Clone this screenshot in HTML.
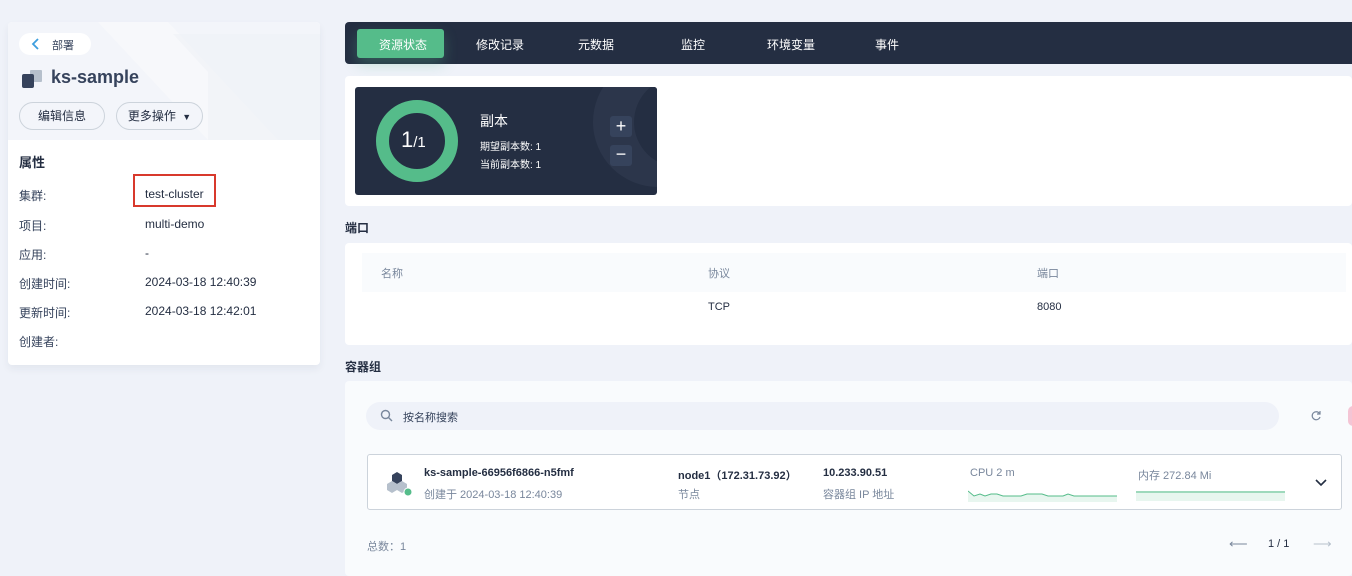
<!DOCTYPE html>
<html><head><meta charset="utf-8"><style>
*{box-sizing:border-box;margin:0;padding:0}
body{width:1352px;height:576px;overflow:hidden;background:#eff2f9;font-family:"Liberation Sans","Noto Sans CJK SC",sans-serif;color:#242e42;font-size:12px;position:relative}
.abs{position:absolute}
.left{left:8px;top:22px;width:312px;height:343px;background:#fff;border-radius:4px;box-shadow:0 4px 8px rgba(36,46,66,.06);overflow:hidden}
.lhead{position:absolute;left:0;top:0;width:312px;height:118px;background:#f3f5fa}
.btn{position:absolute;height:28px;border:1px solid #ccd3db;border-radius:14px;background:#f3f5fa;font-size:12px;line-height:26px;text-align:center;color:#242e42}
.prop{position:absolute;left:11px;font-size:12px;color:#36435c}
.val{position:absolute;left:137px;font-size:12px;color:#242e42}
.tabs{left:345px;top:22px;width:1007px;height:42px;background:#242e42;border-radius:4px 0 0 4px}
.tab{position:absolute;top:14px;color:#fff;font-size:12px}
.white{background:#fff;border-radius:4px}
.lbl{position:absolute;left:345px;font-size:12px;font-weight:bold;color:#242e42}
</style></head><body>
<div class="abs left">
 <div class="lhead">
  <svg class="abs" style="left:0;top:0" width="312" height="118"><polygon points="90,0 160,0 270,118 200,118" fill="#f7f8fb"/><polygon points="165,12 312,12 312,118 200,118 200,50" fill="#eef1f7" opacity=".6"/></svg>
 </div>
 <div class="abs" style="left:11px;top:11px;width:72px;height:22px;background:#fff;border-radius:11px"></div>
 <svg class="abs" style="left:23px;top:16px" width="10" height="12"><path d="M7 1L2 6l5 5" stroke="#3d9ede" stroke-width="1.8" fill="none"/></svg>
 <div class="abs" style="left:44px;top:15px;font-size:11px;color:#36435c">部署</div>
 <div class="abs" style="left:22px;top:48px;width:12px;height:12px;background:#b6c0cc;border-radius:1px"></div>
 <div class="abs" style="left:14px;top:52px;width:12px;height:14px;background:#36435c;border-radius:2px"></div>
 <div class="abs" style="left:43px;top:45px;font-size:18px;font-weight:bold;color:#36435c">ks-sample</div>
 <div class="btn" style="left:11px;top:80px;width:86px">编辑信息</div>
 <div class="btn" style="left:108px;top:80px;width:87px">更多操作 <span style="font-size:9px;margin-left:3px">▼</span></div>
 <div class="abs" style="left:11px;top:130px;font-size:13px;font-weight:bold">属性</div>
 <div class="prop" style="top:165px">集群:</div><div class="val" style="top:165px">test-cluster</div>
 <div class="abs" style="left:125px;top:152px;width:83px;height:33px;border:2px solid #d8392c"></div>
 <div class="prop" style="top:195px">项目:</div><div class="val" style="top:195px">multi-demo</div>
 <div class="prop" style="top:224px">应用:</div><div class="val" style="top:224px">-</div>
 <div class="prop" style="top:253px">创建时间:</div><div class="val" style="top:253px">2024-03-18 12:40:39</div>
 <div class="prop" style="top:282px">更新时间:</div><div class="val" style="top:282px">2024-03-18 12:42:01</div>
 <div class="prop" style="top:311px">创建者:</div>
</div>

<div class="abs tabs">
 <div class="abs" style="left:12px;top:7px;width:87px;height:29px;background:#55bc8a;border-radius:3px;box-shadow:0 6px 14px rgba(85,188,138,.3)"></div>
 <div class="tab" style="left:34px">资源状态</div>
 <div class="tab" style="left:131px">修改记录</div>
 <div class="tab" style="left:233px">元数据</div>
 <div class="tab" style="left:336px">监控</div>
 <div class="tab" style="left:422px">环境变量</div>
 <div class="tab" style="left:530px">事件</div>
</div>

<div class="abs white" style="left:345px;top:76px;width:1007px;height:130px"></div>
<div class="abs" style="left:355px;top:87px;width:302px;height:108px;background:#242e42;border-radius:3px;overflow:hidden">
 <div class="abs" style="left:238px;top:-30px;width:130px;height:130px;border-radius:50%;background:#2c364b"></div>
 <div class="abs" style="left:279px;top:-10px;width:90px;height:90px;border-radius:50%;background:#242e42"></div>
 <div class="abs" style="left:21px;top:13px;width:82px;height:82px;border-radius:50%;border:13px solid #55bc8a"></div>
 <div class="abs" style="left:46px;top:40px;color:#fff;font-size:22px">1<span style="font-size:15px">/1</span></div>
 <div class="abs" style="left:125px;top:24px;color:#fff;font-size:14px">副本</div>
 <div class="abs" style="left:125px;top:51px;color:#fff;font-size:10px">期望副本数: 1</div>
 <div class="abs" style="left:125px;top:69px;color:#fff;font-size:10px">当前副本数: 1</div>
 <div class="abs" style="left:255px;top:29px;width:22px;height:21px;background:#36435c;border-radius:3px;color:#fff;font-size:18px;line-height:20px;text-align:center">+</div>
 <div class="abs" style="left:255px;top:58px;width:22px;height:21px;background:#36435c;border-radius:3px;color:#fff;font-size:18px;line-height:18px;text-align:center">−</div>
</div>

<div class="lbl" style="top:219px">端口</div>
<div class="abs white" style="left:345px;top:243px;width:1007px;height:102px"></div>
<div class="abs" style="left:362px;top:253px;width:984px;height:71px;background:#f9fbfd"></div>
<div class="abs" style="left:362px;top:292px;width:984px;height:32px;background:#fff"></div>
<div class="abs" style="left:381px;top:265px;color:#79879c;font-size:11px">名称</div>
<div class="abs" style="left:708px;top:265px;color:#79879c;font-size:11px">协议</div>
<div class="abs" style="left:1037px;top:265px;color:#79879c;font-size:11px">端口</div>
<div class="abs" style="left:708px;top:301px;font-size:11px">TCP</div>
<div class="abs" style="left:1037px;top:301px;font-size:11px">8080</div>

<div class="lbl" style="top:358px">容器组</div>
<div class="abs" style="left:345px;top:381px;width:1007px;height:195px;background:#f9fbfd;border-radius:4px"></div>
<div class="abs" style="left:366px;top:402px;width:913px;height:28px;background:#eff2f9;border-radius:14px"></div>
<svg class="abs" style="left:380px;top:409px" width="13" height="13"><circle cx="5.5" cy="5.5" r="4" stroke="#79879c" stroke-width="1.4" fill="none"/><path d="M8.5 8.5L12 12" stroke="#79879c" stroke-width="1.4"/></svg>
<div class="abs" style="left:403px;top:409px;font-size:11px;color:#36435c">按名称搜索</div>
<svg class="abs" style="left:1310px;top:410px" width="12" height="12"><path d="M9.5 3.5A4 4 0 1 0 10 7" stroke="#79879c" stroke-width="1.2" fill="none"/><path d="M10 1v3H7" stroke="#79879c" stroke-width="1.2" fill="none"/></svg>
<div class="abs" style="left:1348px;top:406px;width:10px;height:20px;border-radius:5px;background:#f4c5d5"></div>

<div class="abs" style="left:367px;top:454px;width:975px;height:56px;background:#fff;border:1px solid #ccd3db;border-radius:3px"></div>
<svg class="abs" style="left:383px;top:470px" width="32" height="28"><polygon points="14,2 19,5 19,11 14,14 9,11 9,5" fill="#36435c"/><polygon points="9,11 14,14 14,20 9,23 4,20 4,14" fill="#b6c0cc"/><polygon points="19,11 24,14 24,20 19,23 14,20 14,14" fill="#b6c0cc"/><circle cx="25" cy="22" r="4" fill="#55bc8a" stroke="#fff" stroke-width="1"/></svg>
<div class="abs" style="left:424px;top:467px;font-size:11px;font-weight:bold">ks-sample-66956f6866-n5fmf</div>
<div class="abs" style="left:424px;top:486px;font-size:11px;color:#79879c">创建于 2024-03-18 12:40:39</div>
<div class="abs" style="left:678px;top:467px;font-size:11px;font-weight:bold">node1（172.31.73.92）</div>
<div class="abs" style="left:678px;top:486px;font-size:11px;color:#79879c">节点</div>
<div class="abs" style="left:823px;top:467px;font-size:11px;font-weight:bold">10.233.90.51</div>
<div class="abs" style="left:823px;top:486px;font-size:11px;color:#79879c">容器组 IP 地址</div>
<div class="abs" style="left:970px;top:467px;font-size:11px;color:#79879c">CPU 2 m</div>
<div class="abs" style="left:1138px;top:467px;font-size:11px;color:#79879c">内存 272.84 Mi</div>
<svg class="abs" style="left:968px;top:490px" width="150" height="12"><path d="M0 1L6 6 12 4 17 6 23 4 29 4 35 6 53 6 59 4 74 4 80 6 95 6 100 4 106 6 149 6L149 12 0 12Z" fill="#e8f6ef"/><path d="M0 1L6 6 12 4 17 6 23 4 29 4 35 6 53 6 59 4 74 4 80 6 95 6 100 4 106 6 149 6" stroke="#55bc8a" fill="none"/></svg>
<svg class="abs" style="left:1136px;top:490px" width="150" height="12"><rect x="0" y="1" width="149" height="10" fill="#e8f6ef"/><path d="M0 2H149" stroke="#55bc8a"/></svg>
<svg class="abs" style="left:1315px;top:478px" width="12" height="9"><path d="M1 2l5 5 5-5" stroke="#242e42" stroke-width="1.6" fill="none"/></svg>

<div class="abs" style="left:367px;top:538px;font-size:11px;color:#79879c">总数：1</div>
<div class="abs" style="left:1229px;top:536px;font-size:13px;color:#79879c">⟵</div>
<div class="abs" style="left:1268px;top:538px;font-size:11px">1 / 1</div>
<div class="abs" style="left:1313px;top:536px;font-size:13px;color:#b6c0cc">⟶</div>
</body></html>
